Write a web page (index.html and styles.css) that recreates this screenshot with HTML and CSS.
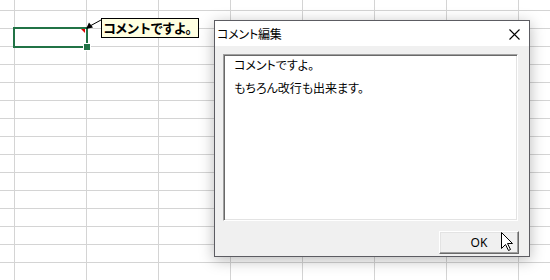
FILE: index.html
```html
<!DOCTYPE html>
<html lang="ja">
<head>
<meta charset="utf-8">
<link rel="stylesheet" href="styles.css">
</head>
<body>
<div class="sheet">
  <div class="cell-sel"><span class="flag"></span><span class="handle"></span></div>
  <svg class="pointer" width="18" height="12" viewBox="0 0 18 12">
    <line x1="4" y1="7" x2="15" y2="1" stroke="#000" stroke-width="1"/>
    <polygon points="0,10 3,3.5 7,8.5" fill="#000"/>
  </svg>
  <div class="note">コメントですよ。</div>

  <div class="dialog">
    <div class="titlebar">
      <span class="title">コメント編集</span>
      <svg class="close" width="11" height="11" viewBox="0 0 11 11">
        <path d="M0.5 0.5 L10.5 10.5 M10.5 0.5 L0.5 10.5" stroke="#000" stroke-width="1.1" fill="none"/>
      </svg>
    </div>
    <div class="body">
      <div class="textbox">
        <p>コメントですよ。</p>
        <p>もちろん改行も出来ます。</p>
      </div>
      <div class="actions"><button class="ok">OK</button></div>
    </div>
  </div>

  <svg class="cursor" width="13" height="20" viewBox="0 0 13 20">
    <path d="M0.5 0.5 L0.5 16.5 L4.5 12.5 L7.5 18.5 L9.5 17.5 L6.5 11.5 L11.5 11.5 Z" fill="#fff" stroke="#000" stroke-width="1" stroke-linejoin="miter"/>
  </svg>
</div>
</body>
</html>
```

FILE: styles.css
```css
* { box-sizing: border-box; }

html, body {
  margin: 0;
  padding: 0;
}

body {
  width: 550px;
  height: 280px;
  overflow: hidden;
  font-family: "Noto Sans CJK JP", "Noto Sans", sans-serif;
}

.sheet {
  position: relative;
  width: 550px;
  height: 280px;
  background-color: #fff;
  background-image:
    linear-gradient(to right, #d4d4d4 1px, transparent 1px),
    linear-gradient(to bottom, #d4d4d4 1px, transparent 1px);
  background-size: 72px 100%, 100% 18px;
  background-position: 14px 0, 0 10px;
}

.cell-sel {
  position: absolute;
  left: 13px;
  top: 27px;
  width: 75px;
  height: 21px;
  border: 2px solid #217346;
}

.flag {
  position: absolute;
  right: 1px;
  top: 0;
  width: 0;
  height: 0;
  border-top: 4px solid #e00000;
  border-left: 4px solid transparent;
}

.handle {
  position: absolute;
  right: -4px;
  bottom: -4px;
  width: 6px;
  height: 6px;
  background: #217346;
  outline: 1px solid #fff;
}

.pointer {
  position: absolute;
  left: 86px;
  top: 19px;
}

.note {
  position: absolute;
  left: 101px;
  top: 18px;
  width: 98px;
  height: 20px;
  border: 1px solid #000;
  background: #ffffe1;
  font-size: 13px;
  font-weight: bold;
  line-height: 17px;
  padding-left: 1px;
  letter-spacing: -1.2px;
  color: #000;
  white-space: nowrap;
}

.dialog {
  position: absolute;
  left: 214px;
  top: 20px;
  width: 316px;
  height: 237px;
  border: 1px solid #5c5c62;
  background: #f0f0f0;
  display: flex;
  flex-direction: column;
  box-shadow: 0 3px 14px rgba(0, 0, 0, 0.28);
}

.titlebar {
  height: 25px;
  background: #fff;
  display: flex;
  align-items: center;
  justify-content: space-between;
  padding: 0 9px 0 2px;
}

.title {
  font-size: 12px;
  color: #000;
  font-feature-settings: "palt";
  letter-spacing: -0.2px;
  line-height: 14px;
}

.close {
  display: block;
  margin-top: 1px;
}

.body {
  flex: 1;
  display: flex;
  flex-direction: column;
  padding: 8px 10px 2px 8px;
}

.textbox {
  height: 167px;
  margin-right: 1px;
  background: #fff;
  border-top: 1px solid #a0a0a0;
  border-left: 1px solid #a0a0a0;
  border-bottom: 1px solid #fff;
  border-right: 1px solid #fff;
  box-shadow: inset 1px 1px 0 #696969, inset -1px -1px 0 #e3e3e3;
  padding: 3px 0 0 10px;
}

.textbox p {
  margin: 0 0 9px 0;
  font-size: 12px;
  line-height: 14px;
  color: #000;
  font-feature-settings: "palt";
}

.actions {
  margin-top: 10px;
  display: flex;
  justify-content: flex-end;
}

.ok {
  width: 80px;
  height: 23px;
  margin: 0;
  padding: 0;
  background: #f0f0f0;
  border-top: 1px solid #fff;
  border-left: 1px solid #fff;
  border-bottom: 1px solid #696969;
  border-right: 1px solid #696969;
  box-shadow: inset -1px -1px 0 #a0a0a0, inset 1px 1px 0 #e3e3e3;
  font-family: "Noto Sans", "Noto Sans CJK JP", sans-serif;
  font-size: 12px;
  color: #000;
  line-height: 20px;
}

.cursor {
  position: absolute;
  left: 501px;
  top: 232px;
}
```
